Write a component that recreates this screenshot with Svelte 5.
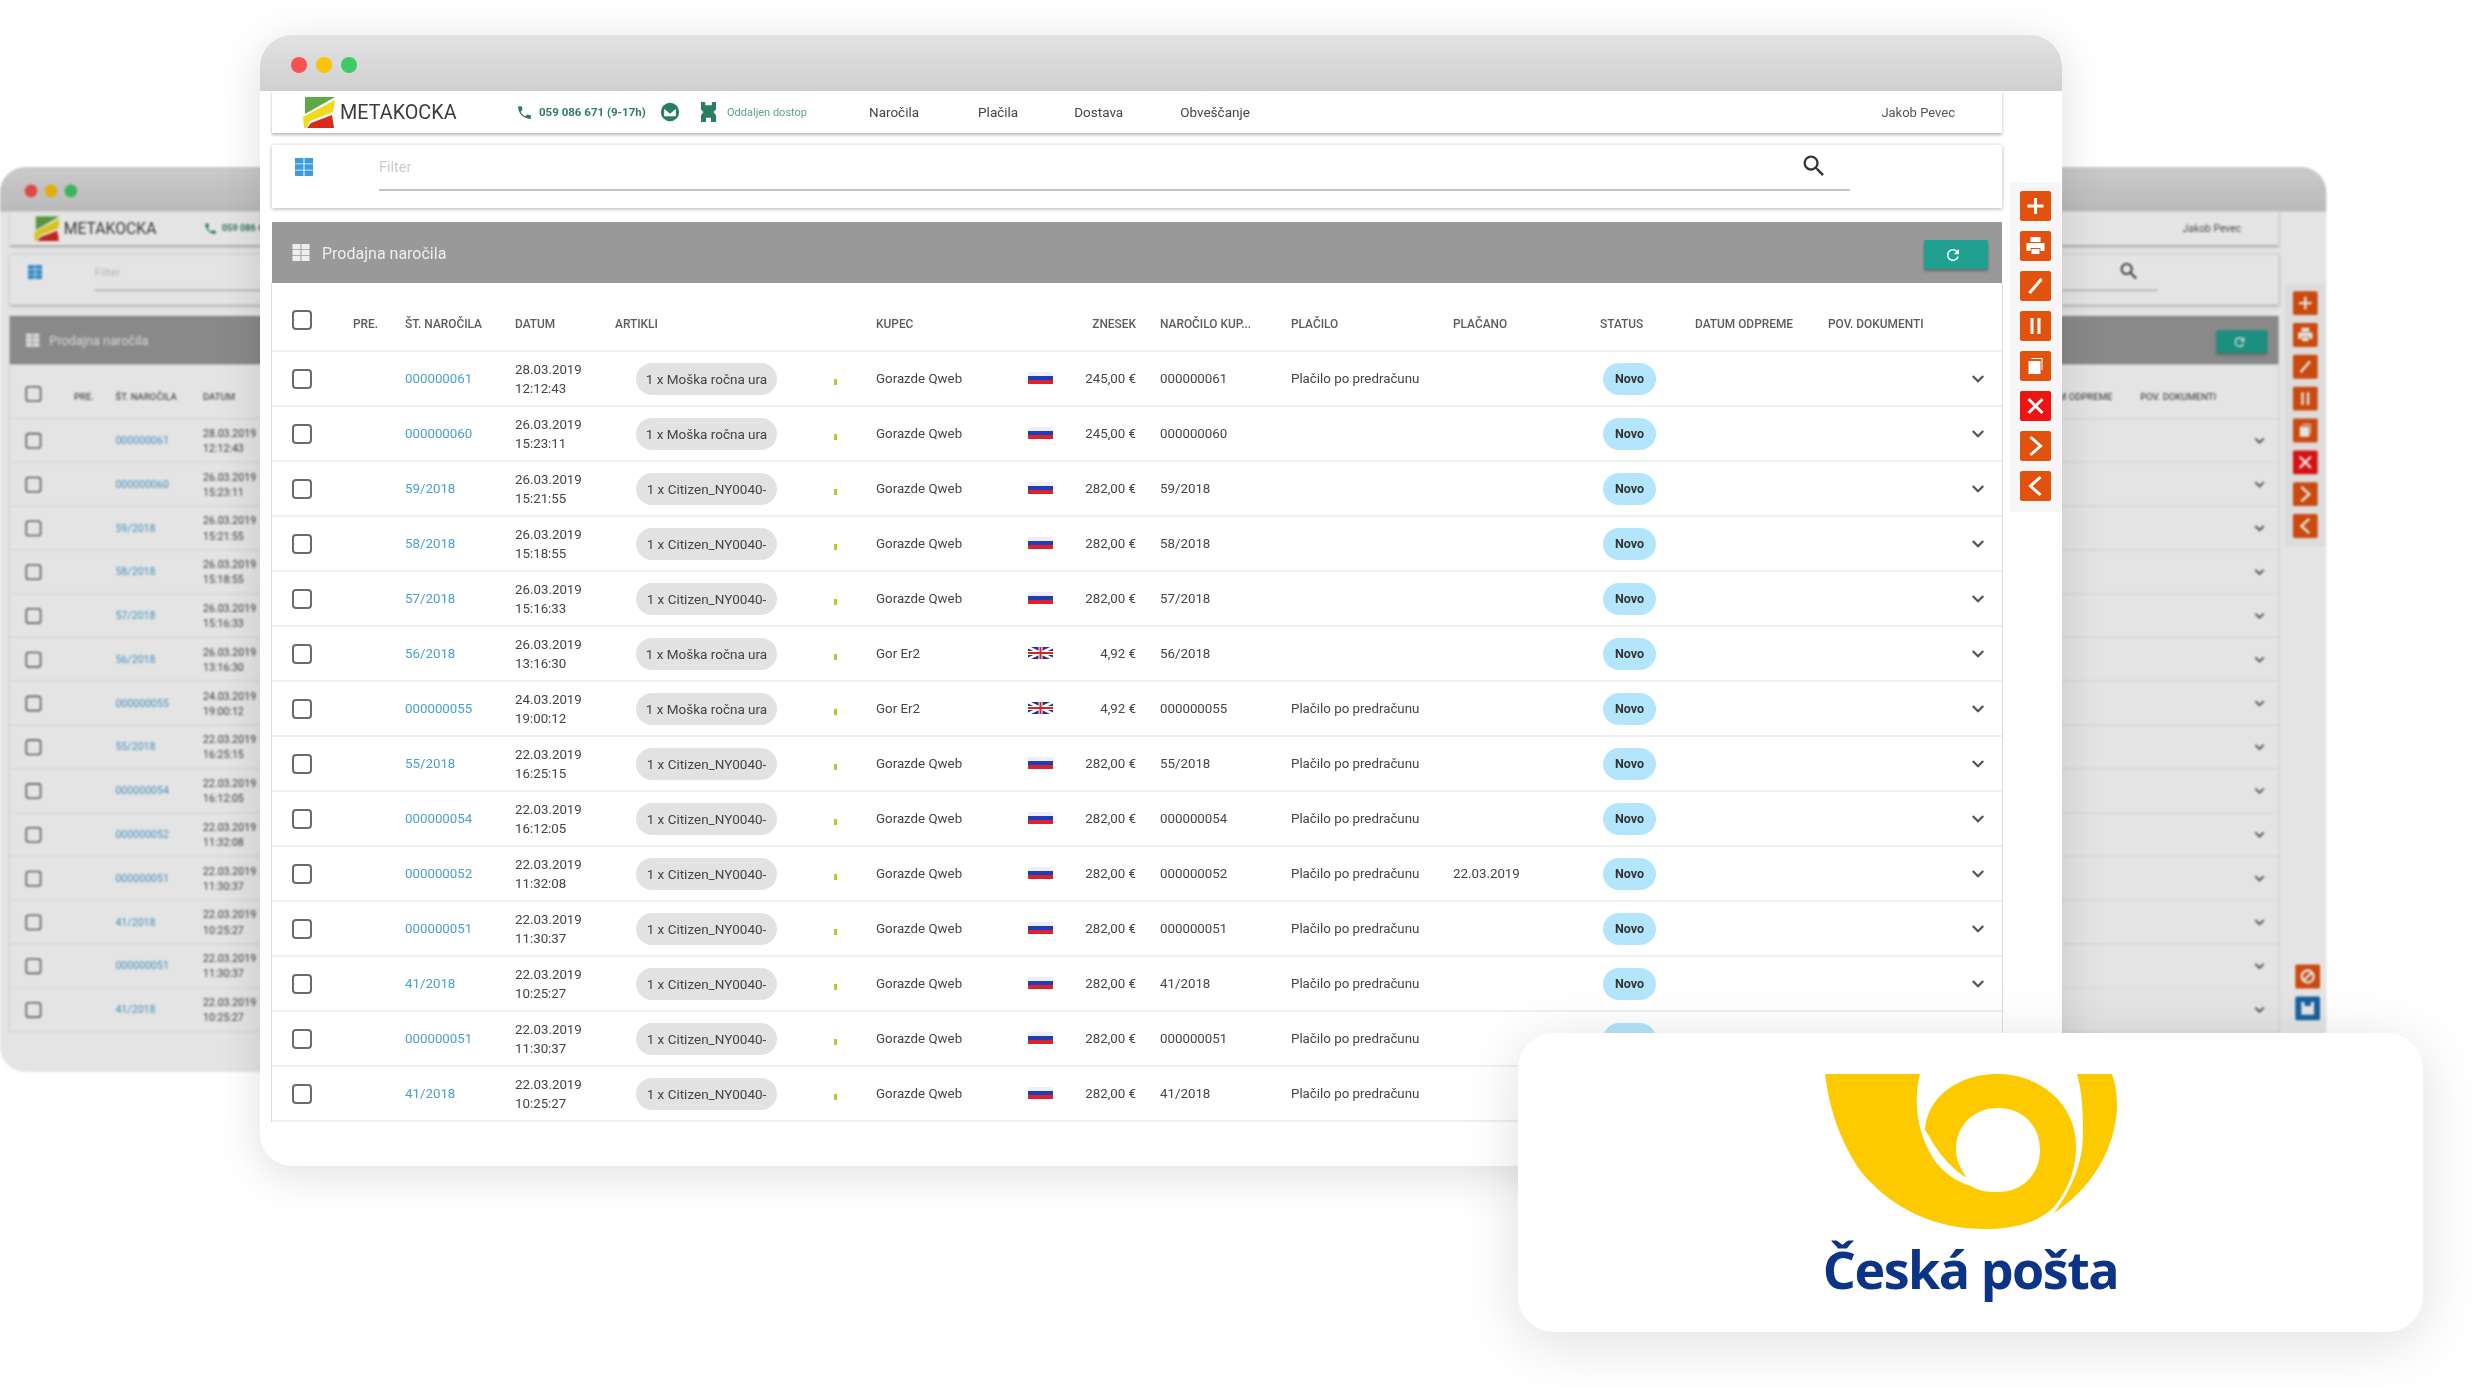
<script>
  const windows = ['left', 'right', 'main'];

  const moska = '1 x Moška ročna ura';
  const citizen = '1 x Citizen_NY0040-';
  const pay = 'Plačilo po predračunu';
  const qweb = 'Gorazde Qweb';
  const er2 = 'Gor Er2';

  const orders = [
    ['000000061', '28.03.2019', '12:12:43', moska, qweb, 'si', '245,00 €', '000000061', pay, ''],
    ['000000060', '26.03.2019', '15:23:11', moska, qweb, 'si', '245,00 €', '000000060', '', ''],
    ['59/2018', '26.03.2019', '15:21:55', citizen, qweb, 'si', '282,00 €', '59/2018', '', ''],
    ['58/2018', '26.03.2019', '15:18:55', citizen, qweb, 'si', '282,00 €', '58/2018', '', ''],
    ['57/2018', '26.03.2019', '15:16:33', citizen, qweb, 'si', '282,00 €', '57/2018', '', ''],
    ['56/2018', '26.03.2019', '13:16:30', moska, er2, 'uk', '4,92 €', '56/2018', '', ''],
    ['000000055', '24.03.2019', '19:00:12', moska, er2, 'uk', '4,92 €', '000000055', pay, ''],
    ['55/2018', '22.03.2019', '16:25:15', citizen, qweb, 'si', '282,00 €', '55/2018', pay, ''],
    ['000000054', '22.03.2019', '16:12:05', citizen, qweb, 'si', '282,00 €', '000000054', pay, ''],
    ['000000052', '22.03.2019', '11:32:08', citizen, qweb, 'si', '282,00 €', '000000052', pay, '22.03.2019'],
    ['000000051', '22.03.2019', '11:30:37', citizen, qweb, 'si', '282,00 €', '000000051', pay, ''],
    ['41/2018', '22.03.2019', '10:25:27', citizen, qweb, 'si', '282,00 €', '41/2018', pay, ''],
    ['000000051', '22.03.2019', '11:30:37', citizen, qweb, 'si', '282,00 €', '000000051', pay, ''],
    ['41/2018', '22.03.2019', '10:25:27', citizen, qweb, 'si', '282,00 €', '41/2018', pay, '']
  ];

  const tools = [
    { d: 'M12 4v16M4 12h16', kind: 'stroke' },
    { d: 'M7 3h10v5H7zM3 9h18v8h-4v-3H7v3H3zM8 15h8v5H8z', kind: 'fill' },
    { d: 'M6 19L18 5', kind: 'stroke' },
    { d: 'M7 4h3v16H7zM14 4h3v16h-3z', kind: 'fill' },
    { d: 'M5 7h12v13H5zM8 4h11v12h-1V5H8z', kind: 'fill' },
    { d: 'M5 5l14 14M19 5L5 19', kind: 'stroke', red: true },
    { d: 'M7 3l10 9-10 9', kind: 'stroke' },
    { d: 'M17 3L7 12l10 9', kind: 'stroke' }
  ];
</script>

{#snippet gridIcon(cls)}
  <svg class={cls} viewBox="0 0 18 18"><path d="M0 0h8.500v5.500H0zM9.500 0H18v5.500H9.500zM0 6.300h8.500v5.400H0zM9.500 6.300H18v5.400H9.500zM0 12.500h8.500V18H0zM9.500 12.500H18V18H9.500z" /></svg>
{/snippet}

<div class="stage">
  {#each windows as side}
    <section class="window {side}">
      <header class="titlebar">
        <i class="dot red"></i><i class="dot yellow"></i><i class="dot green"></i>
      </header>

      <div class="body">
        <div class="content">
          <nav class="topnav">
            <div class="brand">
              <svg viewBox="0 0 32 31" class="brand-mark">
                <path d="M2 0H32L2 17Z" fill="#5fa845" />
                <path d="M0 20L32 3L30 15L7 24L3 31H1Z" fill="#f2d91c" />
                <path d="M4 31L8 26L29 18L31 31Z" fill="#d92a1c" />
              </svg>
              <span>METAKOCKA</span>
            </div>
            <svg class="phone" viewBox="0 0 24 24"><path d="M6.600 10.800c1.400 2.800 3.800 5.100 6.600 6.600l2.200-2.200c.3-.3.700-.4 1-.2 1.100.4 2.300.6 3.600.6.600 0 1 .4 1 1V20c0 .6-.4 1-1 1C10.600 21 3 13.400 3 4c0-.6.400-1 1-1h3.500c.6 0 1 .4 1 1 0 1.200.2 2.400.6 3.600.1.300 0 .7-.2 1z" /></svg>
            <span class="tel">059 086 671 (9-17h)</span>
            <svg class="mail" viewBox="0 0 24 24"><circle cx="12" cy="12" r="11" /><path d="M5 8l7 6 7-6v9H5z" fill="#fff" /></svg>
            <svg class="remote" viewBox="0 0 20 24"><path d="M1 0h5v4h8V0h5v9l-3 3 3 4v8h-6v-5H7v5H1v-8l3-4-3-3z" /></svg>
            <span class="remote-label">Oddaljen dostop</span>
            <a class="nav-link first">Naročila</a>
            <a class="nav-link plac">Plačila</a>
            <a class="nav-link dost">Dostava</a>
            <a class="nav-link obv">Obveščanje</a>
            <span class="user">Jakob Pevec</span>
          </nav>

          <div class="filter">
            {@render gridIcon('filter-icon')}
            <div class="filter-input">
              <span>Filter</span>
              <svg class="search" viewBox="0 0 24 24"><path d="M15.500 14h-.79l-.28-.27A6.471 6.471 0 0 0 16 9.500 6.500 6.500 0 1 0 9.500 16c1.610 0 3.090-.590 4.230-1.570l.27.280v.790l5 4.990L20.490 19l-4.990-5zm-6 0C7.010 14 5 11.990 5 9.500S7.010 5 9.500 5 14 7.010 14 9.500 11.990 14 9.500 14z" /></svg>
            </div>
          </div>

          <div class="panel-head">
            {@render gridIcon('panel-icon')}
            <h2>Prodajna naročila</h2>
            <button class="refresh" aria-label="Osveži">
              <svg viewBox="0 0 24 24"><path d="M17.650 6.350A7.958 7.958 0 0 0 12 4a8 8 0 1 0 7.730 10h-2.080A6 6 0 1 1 12 6c1.660 0 3.140.690 4.220 1.780L13 11h7V4z" /></svg>
            </button>
          </div>

          <div class="table">
            <div class="row head">
              <i class="check"></i>
              <span>PRE.</span>
              <span>ŠT. NAROČILA</span>
              <span>DATUM</span>
              <span class="span2">ARTIKLI</span>
              <span class="span2">KUPEC</span>
              <span class="amount">ZNESEK</span>
              <span class="ref">NAROČILO KUP...</span>
              <span>PLAČILO</span>
              <span>PLAČANO</span>
              <span>STATUS</span>
              <span>DATUM ODPREME</span>
              <span>POV. DOKUMENTI</span>
            </div>

            {#each orders as o}
              <div class="row">
                <i class="check"></i>
                <span></span>
                <a class="order-no">{o[0]}</a>
                <span class="date">{o[1]}<br />{o[2]}</span>
                <span class="chip">{o[3]}</span>
                <i class="tick"></i>
                <span>{o[4]}</span>
                {#if o[5] === 'si'}
                  <svg class="flag" viewBox="0 0 25 12"><rect width="25" height="4" fill="#eef" /><rect y="4" width="25" height="4" fill="#1c3fb8" /><rect y="8" width="25" height="4" fill="#e0202a" /></svg>
                {:else}
                  <svg class="flag" viewBox="0 0 25 12"><rect width="25" height="12" fill="#27337e" /><path d="M0 0l25 12M25 0L0 12" stroke="#fff" stroke-width="2.500" /><path d="M12.500 0v12M0 6h25" stroke="#fff" stroke-width="4" /><path d="M12.500 0v12M0 6h25" stroke="#d22" stroke-width="2" /></svg>
                {/if}
                <span class="amount">{o[6]}</span>
                <span class="ref">{o[7]}</span>
                <span>{o[8]}</span>
                <span>{o[9]}</span>
                <span class="status">Novo</span>
                <span></span>
                <svg class="chevron" viewBox="0 0 24 24"><path d="M5 8l7 7 7-7" /></svg>
              </div>
            {/each}
          </div>
        </div>

        <aside class="side">
          <div class="tools">
            {#each tools as t}
              <button class="tool" class:danger={t.red} aria-label="Akcija">
                <svg viewBox="0 0 24 24"><path d={t.d} class={t.kind} /></svg>
              </button>
            {/each}
          </div>
          <div class="tools-low">
            <button class="tool" aria-label="Prepovedano">
              <svg viewBox="0 0 24 24"><circle cx="12" cy="12" r="7.500" class="stroke" /><path d="M7 17L17 7" class="stroke" /></svg>
            </button>
            <button class="tool save" aria-label="Shrani">
              <svg viewBox="0 0 24 24"><path d="M4 4h4v5h8V4h4v16H4zM8 14h8v6H8z" class="fill" /></svg>
            </button>
          </div>
        </aside>
      </div>
    </section>
  {/each}

  <div class="logo-card">
    <svg class="horn" viewBox="0 0 292 155">
      <path d="M0 0H95C88 28 92 58 108 84C118 99 132 108 146 112C155 118 165 118 173 118C198 118 215 100 215 76C215 52 198 34 173 34C148 34 131 52 131 76C131 86 136 96 142 104C128 96 112 78 104 62L100 56C102 22 135 0 172 0C215 0 251 30 251 72C251 92 246 112 229 133C212 150 186 155 159 155C110 155 68 135 37 99C15 68 4 34 0 0Z" fill="#fdca00" />
      <path d="M252 0H287C292 14 292 26 292 34C290 72 270 112 229 139C246 116 258 90 258 60C258 36 257 18 252 0Z" fill="#fdca00" />
    </svg>
    <div class="wordmark">Česká pošta</div>
  </div>
</div>

<style>
  :global(body) {
    margin: 0;
    background: #fff;
    overflow: hidden;
  }

  .stage {
    position: relative;
    width: 2484px;
    height: 1388px;
    overflow: hidden;
    background: #fff;
    font-family: Roboto, "Liberation Sans", sans-serif;
    color: #444;
  }

  .window {
    position: absolute;
    width: 1802px;
    height: 1131px;
    border-radius: 32px;
    overflow: hidden;
    background: #fff;
    font-size: 13.300px;
  }

  .window.main {
    left: 260px;
    top: 35px;
    box-shadow: 0 8px 46px rgba(0, 0, 0, 0.13);
    filter: blur(0.7px);
  }

  .window.left,
  .window.right {
    top: 166.500px;
    height: 1137px;
    transform: scale(0.796);
    transform-origin: 0 0;
    filter: brightness(0.895) blur(1.300px);
  }

  .window.left {
    left: 0;
  }

  .window.right {
    left: 892px;
  }

  /* these parts of the two back windows sit behind the main one */
  .window.left .row > :nth-child(n + 5),
  .window.left .topnav > :nth-child(n + 5),
  .window.right .topnav > :not(.user),
  .window.right .row.head > :nth-child(-n + 11),
  .window.right .row:not(.head) > :nth-child(-n + 13),
  .window.right h2,
  .window.right .filter-input span {
    visibility: hidden;
  }

  .titlebar {
    height: 56px;
    display: flex;
    align-items: center;
    gap: 9px;
    padding: 4px 0 0 31px;
    box-sizing: border-box;
    background: linear-gradient(#e2e2e2, #d0d0d0);
  }

  .dot {
    width: 16px;
    height: 16px;
    border-radius: 50%;
  }

  .dot.red { background: #f9514f; }
  .dot.yellow { background: #fcc30b; }
  .dot.green { background: #3fcb63; }

  .body {
    display: flex;
    padding-left: 12px;
  }

  .content {
    width: 1730px;
    flex: none;
  }

  .topnav {
    height: 42px;
    display: flex;
    align-items: center;
    padding-left: 31px;
    background: #fff;
    box-shadow: 0 2px 3px rgba(0, 0, 0, 0.28);
  }

  .brand {
    display: flex;
    align-items: center;
    gap: 5px;
    width: 213px;
    flex: none;
    font-size: 19.800px;
    color: #3c3c3c;
  }

  .brand-mark {
    width: 32px;
    height: 31px;
    flex: none;
  }

  .phone {
    width: 17px;
    height: 17px;
    fill: #2f7d5d;
    flex: none;
  }

  .tel {
    margin-left: 6px;
    width: 121px;
    flex: none;
    font-size: 11.500px;
    font-weight: 700;
    color: #2f7d5d;
    white-space: nowrap;
  }

  .mail {
    width: 20px;
    height: 20px;
    fill: #2a7d5f;
    flex: none;
  }

  .remote {
    width: 19px;
    height: 20px;
    fill: #2a7d5f;
    flex: none;
    margin-left: 19px;
  }

  .remote-label {
    margin-left: 9px;
    width: 142px;
    flex: none;
    font-size: 11px;
    color: #5f9f88;
    white-space: nowrap;
  }

  .nav-link {
    font-size: 13.500px;
    color: #444;
    flex: none;
  }

  .nav-link.plac { margin-left: 59px; }
  .nav-link.dost { margin-left: 56px; }
  .nav-link.obv { margin-left: 57px; }

  .user {
    margin-left: auto;
    margin-right: 47px;
    font-size: 13px;
    color: #555;
  }

  .filter {
    margin-top: 12px;
    height: 63px;
    display: flex;
    padding-left: 23px;
    box-sizing: border-box;
    background: #fff;
    box-shadow: 0 1px 4px rgba(0, 0, 0, 0.3);
  }

  .filter-icon {
    width: 18px;
    height: 18px;
    fill: #3d9be0;
    margin-top: 13px;
    flex: none;
  }

  .filter-input {
    margin-left: 66px;
    width: 1471px;
    height: 46px;
    padding: 1px 22px 0 0;
    box-sizing: border-box;
    border-bottom: 2px solid #c4c4c4;
    display: flex;
    align-items: center;
    justify-content: space-between;
    font-size: 14.500px;
    color: #ccc;
  }

  .search {
    width: 28px;
    height: 28px;
    fill: #333;
    margin-top: -4px;
  }

  .panel-head {
    margin-top: 14px;
    height: 61px;
    display: flex;
    align-items: center;
    padding: 0 14px 0 20px;
    background: #999;
  }

  .panel-icon {
    width: 18px;
    height: 17px;
    fill: #eee;
    flex: none;
  }

  h2 {
    margin: 2px 0 0 12px;
    font-size: 16px;
    font-weight: 400;
    color: #eee;
  }

  .refresh {
    margin-left: auto;
    margin-top: 4px;
    width: 64px;
    height: 29px;
    border: 0;
    padding: 0 6px 0 0;
    display: flex;
    align-items: center;
    justify-content: center;
    background: #1fa090;
    box-shadow: 0 2px 3px rgba(0, 0, 0, 0.3);
  }

  .refresh svg {
    width: 18px;
    height: 18px;
    fill: #fff;
  }

  .table {
    border-left: 1px solid #ddd;
    border-right: 1px solid #ddd;
    margin-left: -1px;
    margin-right: -1px;
  }

  .row {
    display: grid;
    grid-template-columns: 81px 52px 110px 100px 213px 48px 150px 40px 70px 155px 162px 147px 95px 133px 1fr;
    align-items: center;
    height: 55px;
    box-sizing: border-box;
    padding-top: 1px;
    border-bottom: 2px solid #f0f0f0;
    white-space: nowrap;
  }

  .row.head {
    height: 68.500px;
    padding-top: 15px;
    font-size: 11.900px;
    font-weight: 500;
    color: #5c5c5c;
  }

  .row.head .check {
    margin-bottom: 8px;
  }

  .span2 {
    grid-column: span 2;
  }

  .check {
    width: 20px;
    height: 20px;
    box-sizing: border-box;
    margin-left: 20px;
    border: 2.500px solid #6b6b6b;
    border-radius: 4px;
  }

  .order-no {
    color: #4a9fd0;
  }

  .date {
    line-height: 19px;
  }

  .chip {
    margin-left: 21px;
    width: 141px;
    height: 32px;
    line-height: 32px;
    border-radius: 16px;
    background: #e2e2e2;
    text-align: center;
    font-size: 13.500px;
  }

  .tick {
    width: 3px;
    height: 6px;
    margin: 6px 0 0 6px;
    background: #b4c832;
  }

  .flag {
    width: 25px;
    height: 12px;
    margin-left: 2px;
    margin-top: -2px;
  }

  .amount {
    text-align: right;
  }

  .ref {
    padding-left: 24px;
  }

  .status {
    width: 53px;
    height: 32px;
    line-height: 32px;
    margin-left: 3px;
    border-radius: 16px;
    background: #b3e5fc;
    text-align: center;
    font-size: 12.500px;
    font-weight: 700;
    color: #333;
  }

  .chevron {
    justify-self: end;
    margin-right: 15px;
    width: 18px;
    height: 18px;
    fill: none;
    stroke: #555;
    stroke-width: 3;
  }

  .side {
    flex: 1;
    margin: 91px 0 0 8px;
    display: flex;
    flex-direction: column;
  }

  .tools {
    width: 51px;
    padding: 9px 0 11px;
    display: flex;
    flex-direction: column;
    align-items: center;
    gap: 10px;
    box-sizing: border-box;
    background: #f6f6f6;
  }

  .tools-low {
    margin-top: 525px;
    padding-left: 13px;
    display: flex;
    flex-direction: column;
    gap: 10px;
  }

  .tool {
    width: 31px;
    height: 30px;
    padding: 3px;
    border: 0;
    border-radius: 2px;
    background: #e2520f;
    flex: none;
  }

  .tool.danger {
    background: #f01313;
  }

  .tool.save {
    background: #1c6cb0;
  }

  .tool svg {
    display: block;
    width: 100%;
    height: 100%;
  }

  .tool .stroke {
    fill: none;
    stroke: #fff;
    stroke-width: 3;
  }

  .tool .fill {
    fill: #fff;
  }

  .logo-card {
    position: absolute;
    left: 1518px;
    top: 1033px;
    width: 905px;
    height: 299px;
    border-radius: 36px;
    background: #fff;
    box-shadow: 0 10px 60px rgba(0, 0, 0, 0.13);
    display: flex;
    flex-direction: column;
    align-items: center;
    padding-top: 41px;
    box-sizing: border-box;
  }

  .horn {
    width: 292px;
    height: 155px;
    flex: none;
  }

  .wordmark {
    margin-top: 10px;
    font-family: "Open Sans", "Noto Sans", sans-serif;
    font-weight: 700;
    font-size: 52px;
    line-height: 60px;
    letter-spacing: -1.500px;
    color: #0b3486;
    white-space: nowrap;
  }
</style>
